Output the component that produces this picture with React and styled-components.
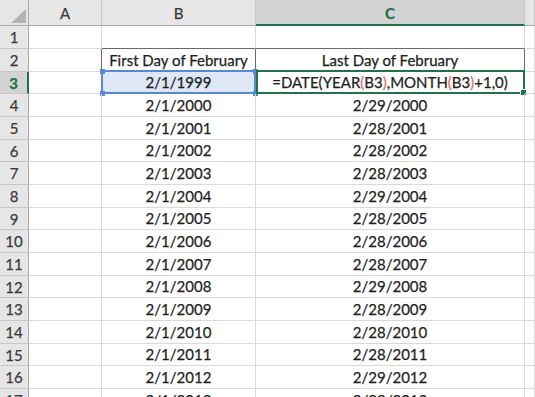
import React from "react";
import styled, { createGlobalStyle, css } from "styled-components";

const Global = createGlobalStyle`
  html, body { margin: 0; padding: 0; background: #fff; }
  body { width: 535px; height: 397px; overflow: hidden; }
  #root { width: 535px; height: 397px; overflow: hidden; }
`;

const GRID = "#d9d9d9";
const HEAD_LINE = "#c6c6c6";
const GREEN = "#217346";
const BLUE = "#5a86d3";
const DARK = "#6a6a6a";

const ROW_HEIGHTS = Array.from({ length: 17 }, (_, i) => ([23, 23, 22][i % 3]));

const Sheet = styled.div`
  display: grid;
  grid-template-columns: 29px 73px 154px 269px 1fr;
  grid-template-rows: 26px ${ROW_HEIGHTS.map((h) => `${h}px`).join(" ")};
  width: 535px;
  height: 397px;
  overflow: hidden;
  font-family: Lato, "Open Sans", "Liberation Sans", sans-serif;
  font-size: 15px;
  color: #1e1e1e;
  -webkit-text-stroke: 0.25px currentColor;
`;

const Corner = styled.div`
  position: relative;
  background: #e6e6e6;
  border-right: 1px solid #ababab;
  border-bottom: 1px solid #ababab;
  box-sizing: border-box;
`;

const CornerTriangle = styled.div`
  position: absolute;
  right: 2px;
  bottom: 2px;
  width: 0;
  height: 0;
  border-left: 15px solid transparent;
  border-bottom: 14px solid #b4b4b4;
`;

const ColHeader = styled.div`
  display: flex;
  align-items: center;
  justify-content: center;
  box-sizing: border-box;
  background: ${(p) => (p.$selected ? "#d3d3d3" : "#e6e6e6")};
  color: ${(p) => (p.$selected ? GREEN : "#3a3a3a")};
  font-size: 15px;
  font-weight: ${(p) => (p.$selected ? 700 : 400)};
  border-right: 1px solid ${HEAD_LINE};
  border-bottom: ${(p) => (p.$selected ? `2px solid ${GREEN}` : "1px solid #ababab")};
  padding-top: ${(p) => (p.$selected ? "1px" : "0")};
`;

const RowHeader = styled.div`
  display: flex;
  align-items: center;
  justify-content: center;
  box-sizing: border-box;
  background: ${(p) => (p.$selected ? "#d3d3d3" : "#e6e6e6")};
  color: ${(p) => (p.$selected ? GREEN : "#3a3a3a")};
  font-size: 15px;
  font-weight: ${(p) => (p.$selected ? 700 : 400)};
  border-bottom: 1px solid ${HEAD_LINE};
  border-right: ${(p) => (p.$selected ? `2px solid ${GREEN}` : "1px solid #ababab")};
`;

const Cell = styled.div`
  position: relative;
  display: flex;
  align-items: center;
  justify-content: center;
  box-sizing: border-box;
  white-space: nowrap;
  border-right: 1px solid ${(p) => (p.$darkRight ? DARK : GRID)};
  border-bottom: 1px solid ${(p) => (p.$darkBottom ? DARK : GRID)};
  padding-bottom: 1px;
  ${(p) =>
    p.$refFill &&
    css`
      background: #dde7f5;
    `}
`;

const RefBox = styled.div`
  position: absolute;
  top: -2px;
  left: -1px;
  right: -1px;
  bottom: -1px;
  border: 2px solid ${BLUE};
  pointer-events: none;
`;

const Handle = styled.span`
  position: absolute;
  width: 5px;
  height: 5px;
  background: ${BLUE};
  ${(p) => (p.$top ? "top: -3.5px;" : "bottom: -3.5px;")}
  ${(p) => (p.$left ? "left: -3.5px;" : "right: -3.5px;")}
`;

const ActiveBox = styled.div`
  position: absolute;
  top: -2px;
  left: 0px;
  right: -1px;
  bottom: -1px;
  border: 2px solid ${GREEN};
  pointer-events: none;
`;

const FillHandle = styled.span`
  position: absolute;
  right: -4px;
  bottom: -4px;
  width: 5px;
  height: 5px;
  background: ${GREEN};
  border: 1px solid #fff;
`;

const Paren = styled.span`
  color: #e0726b;
`;

const Formula = () => (
  <span>
    =DATE(YEAR<Paren>(</Paren>B3<Paren>)</Paren>,MONTH<Paren>(</Paren>B3<Paren>)</Paren>+1,0)
  </span>
);

const years = Array.from({ length: 15 }, (_, i) => 1999 + i);
const isLeap = (y) => (y % 4 === 0 && y % 100 !== 0) || y % 400 === 0;

export default function App() {
  const rows = [];
  for (let r = 1; r <= 17; r++) {
    const selected = r === 3;
    let b = null;
    let c = null;
    if (r === 2) {
      b = "First Day of February";
      c = "Last Day of February";
    } else if (r >= 3) {
      const y = years[r - 3];
      b = `2/1/${y}`;
      c = r === 3 ? <Formula /> : `2/${isLeap(y) ? 29 : 28}/${y}`;
    }
    rows.push(
      <React.Fragment key={r}>
        <RowHeader $selected={selected}>{r}</RowHeader>
        <Cell $darkRight={r === 2}></Cell>
        <Cell $darkRight={r === 2} $darkBottom={r === 1 || r === 2} $refFill={r === 3}>
          {b}
          {r === 3 && (
            <RefBox>
              <Handle $top $left />
              <Handle $top />
              <Handle $left />
              <Handle />
            </RefBox>
          )}
        </Cell>
        <Cell $darkRight={r === 2} $darkBottom={r === 1 || r === 2}>
          {c}
          {r === 3 && (
            <ActiveBox>
              <FillHandle />
            </ActiveBox>
          )}
        </Cell>
        <Cell></Cell>
      </React.Fragment>
    );
  }
  return (
    <>
      <Global />
      <Sheet>
        <Corner>
          <CornerTriangle />
        </Corner>
        <ColHeader>A</ColHeader>
        <ColHeader>B</ColHeader>
        <ColHeader $selected>C</ColHeader>
        <ColHeader></ColHeader>
        {rows}
      </Sheet>
    </>
  );
}
